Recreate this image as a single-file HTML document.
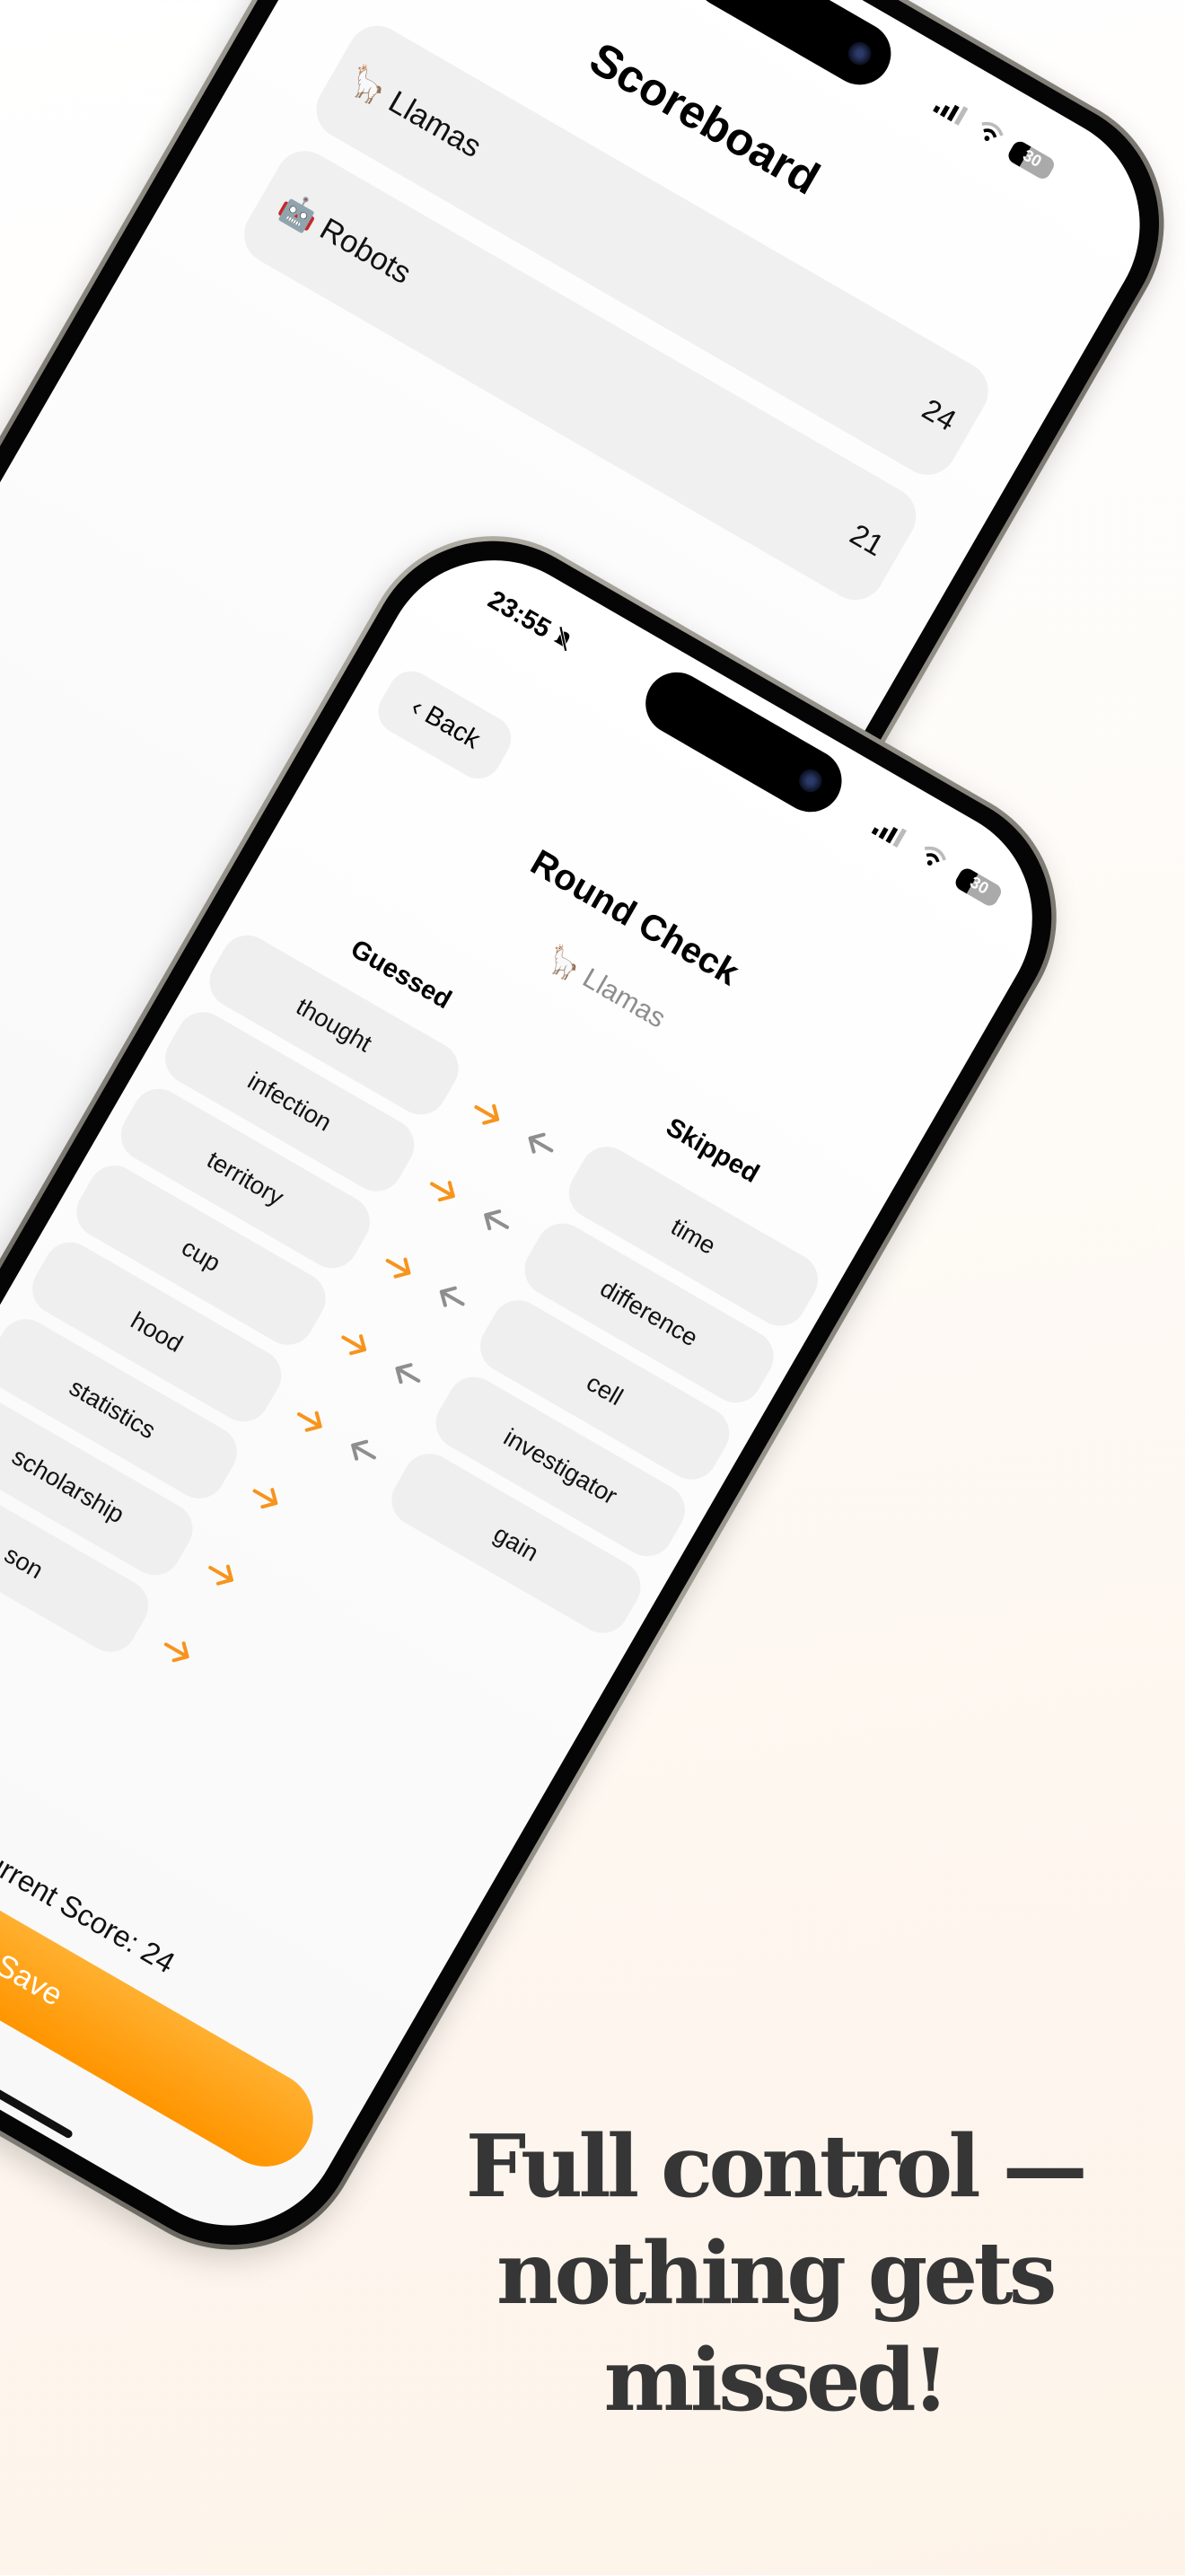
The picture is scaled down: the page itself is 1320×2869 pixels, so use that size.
<!DOCTYPE html>
<html><head><meta charset="utf-8">
<style>
html,body{margin:0;padding:0;}
body{width:1320px;height:2868px;overflow:hidden;background:linear-gradient(170deg,#ffffff 0%,#fefbf7 40%,#fdf3e9 100%);font-family:"Liberation Sans","Noto Sans CJK JP",sans-serif;}
#s{position:absolute;left:0;top:0;width:722px;height:1569px;transform:scale(1.82825);transform-origin:0 0;}
.anchor{position:absolute;width:0;height:0;transform:rotate(30deg);transform-origin:0 0;}
.phone{position:absolute;left:-232px;top:-40px;width:464px;height:1005px;border-radius:80px;background:linear-gradient(135deg,#b4b1a8,#6f6c65 40%,#a9a69d 70%,#5d5a54);box-shadow:0 6px 18px rgba(0,0,0,.18);}
.bezel{position:absolute;left:3px;top:3px;right:3px;bottom:3px;border-radius:77px;background:#050505;}
.screen{position:absolute;left:11px;top:11px;right:11px;bottom:11px;border-radius:68px;background:linear-gradient(180deg,#ffffff,#f8f8f8);overflow:hidden;}
.o{position:absolute;left:221px;top:29px;width:0;height:0;}
.c{position:absolute;transform:translate(-50%,-50%);white-space:nowrap;}
.island{position:absolute;left:-66px;top:-19px;width:132px;height:38px;border-radius:19px;background:#000;}
.cam{position:absolute;right:12px;top:12px;width:14px;height:14px;border-radius:50%;background:radial-gradient(circle,#2b3a6a 20%,#0b0f1e 70%);}
.pill{position:absolute;transform:translate(-50%,-50%);width:162px;height:46px;border-radius:16px;background:#efefef;font-size:15px;color:#111;display:flex;align-items:center;justify-content:center;}
.row{position:absolute;left:-218px;width:436px;height:74px;border-radius:18px;background:#f0f0f0;}
.t{font-size:18px;color:#111;}
h1{position:absolute;left:262px;top:1288px;width:420px;margin:0;text-align:center;font-family:"DejaVu Serif","Liberation Serif",serif;font-weight:bold;font-size:52px;line-height:65px;letter-spacing:-2.5px;color:#363636;}
</style></head><body>
<div id="s">

<!-- back phone -->
<div class="anchor" style="left:482px;top:5px;">
 <div class="phone" style="left:-287px;width:560px;"><div class="bezel"><div class="screen"><div class="o" style="left:276px;">
  <div class="c" style="left:-15px;top:82px;font-size:28px;font-weight:bold;color:#000;">Scoreboard</div>
  <div class="row" style="top:130px;left:-225px;width:445px;"></div>
  <div class="row" style="top:218px;left:-225px;width:445px;"></div>
  <div class="c t" style="left:-170px;top:167px;font-size:19px;">🦙 Llamas</div>
  <div class="c t" style="left:199px;top:167px;">24</div>
  <div class="c t" style="left:-168px;top:255px;font-size:19px;">🤖 Robots</div>
  <div class="c t" style="left:199px;top:255px;">21</div>
  <div class="c" style="left:113px;top:4px;"><svg width="20" height="12"><rect x="0" y="8" width="3" height="4" fill="#000"/><rect x="5" y="5" width="3" height="7" fill="#000"/><rect x="10" y="2" width="3" height="10" fill="#000"/><rect x="15" y="0" width="3" height="12" fill="#bbb"/></svg></div>
  <div class="c" style="left:140px;top:4px;"><svg width="16" height="12"><path d="M1 4 Q8 -2 15 4" stroke="#bbb" stroke-width="2" fill="none"/><path d="M4 7 Q8 3 12 7" stroke="#000" stroke-width="2" fill="none"/><circle cx="8" cy="10" r="1.6" fill="#000"/></svg></div>
  <div class="c" style="left:170px;top:4px;width:28px;height:14px;border-radius:5px;background:linear-gradient(90deg,#000 35%,#aaa 35%);color:#fff;font-size:10px;font-weight:bold;text-align:center;line-height:14px;">30</div>
  <div class="island"><div class="cam"></div></div>
 </div></div></div></div>
</div>

<!-- front phone -->
<div class="anchor" style="left:452px;top:448px;">
 <div class="phone"><div class="bezel"><div class="screen"><div class="o">
  <div class="c" style="left:-149px;top:2px;font-size:16px;font-weight:bold;">23:55 <svg width="12" height="13" style="vertical-align:-1px"><path d="M3 9 V5.5 Q3 2 6 2 Q9 2 9 5.5 V9 L10.5 10.5 H1.5 Z" fill="#000"/><path d="M1 1 L11 12" stroke="#fff" stroke-width="2.2"/><path d="M1 1 L11 12" stroke="#000" stroke-width="1.2"/></svg></div>
  <div class="c" style="left:105px;top:5px;"><svg width="20" height="12"><rect x="0" y="8" width="3" height="4" fill="#000"/><rect x="5" y="5" width="3" height="7" fill="#000"/><rect x="10" y="2" width="3" height="10" fill="#000"/><rect x="15" y="0" width="3" height="12" fill="#bbb"/></svg></div>
  <div class="c" style="left:135px;top:5px;"><svg width="16" height="12"><path d="M1 4 Q8 -2 15 4" stroke="#bbb" stroke-width="2" fill="none"/><path d="M4 7 Q8 3 12 7" stroke="#000" stroke-width="2" fill="none"/><circle cx="8" cy="10" r="1.6" fill="#000"/></svg></div>
  <div class="c" style="left:168px;top:5px;width:28px;height:14px;border-radius:5px;background:linear-gradient(90deg,#000 35%,#aaa 35%);color:#fff;font-size:10px;font-weight:bold;text-align:center;line-height:14px;">30</div>
  <div class="island"><div class="cam"></div></div>

  <div class="c" style="left:-163px;top:82px;width:82px;height:40px;border-radius:14px;background:#f0f0f0;font-size:16px;display:flex;align-items:center;justify-content:center;">‹&nbsp;Back</div>

  <div class="c" style="left:-4px;top:126px;font-size:22px;font-weight:bold;">Round Check</div>
  <div class="c" style="left:2px;top:172px;font-size:17px;color:#8e8e8e;">🦙 Llamas</div>
  <div class="c" style="left:-110px;top:228px;font-size:16px;font-weight:bold;">Guessed</div>
  <div class="c" style="left:108px;top:226px;font-size:16px;font-weight:bold;">Skipped</div>

  <div class="pill" style="left:-130px;top:274px;">thought</div>
  <div class="pill" style="left:-130px;top:328px;">infection</div>
  <div class="pill" style="left:-130px;top:382px;">territory</div>
  <div class="pill" style="left:-130px;top:436px;">cup</div>
  <div class="pill" style="left:-130px;top:490px;">hood</div>
  <div class="pill" style="left:-130px;top:544px;">statistics</div>
  <div class="pill" style="left:-130px;top:598px;">scholarship</div>
  <div class="pill" style="left:-130px;top:652px;">son</div>

  <div class="pill" style="left:124px;top:276px;">time</div>
  <div class="pill" style="left:124px;top:330px;">difference</div>
  <div class="pill" style="left:124px;top:384px;">cell</div>
  <div class="pill" style="left:124px;top:438px;">investigator</div>
  <div class="pill" style="left:124px;top:492px;">gain</div>

  <svg style="position:absolute;left:-32px;top:264px;overflow:visible" width="20" height="440">
   <g fill="none" stroke="#f7941d" stroke-width="2.2" stroke-linecap="round" stroke-linejoin="round">
    <path d="M2 10 H17 M11 4 L17 10 L11 16"/>
    <path d="M2 64 H17 M11 58 L17 64 L11 70"/>
    <path d="M2 118 H17 M11 112 L17 118 L11 124"/>
    <path d="M2 172 H17 M11 166 L17 172 L11 178"/>
    <path d="M2 226 H17 M11 220 L17 226 L11 232"/>
    <path d="M2 280 H17 M11 274 L17 280 L11 286"/>
    <path d="M2 334 H17 M11 328 L17 334 L11 340"/>
    <path d="M2 388 H17 M11 382 L17 388 L11 394"/>
   </g>
  </svg>
  <svg style="position:absolute;left:6px;top:264px;overflow:visible" width="20" height="300">
   <g fill="none" stroke="#8e8e8e" stroke-width="2.2" stroke-linecap="round" stroke-linejoin="round">
    <path d="M17 10 H2 M8 4 L2 10 L8 16"/>
    <path d="M17 64 H2 M8 58 L2 64 L8 70"/>
    <path d="M17 118 H2 M8 112 L2 118 L8 124"/>
    <path d="M17 172 H2 M8 166 L2 172 L8 178"/>
    <path d="M17 226 H2 M8 220 L2 226 L8 232"/>
   </g>
  </svg>

  <div class="c" style="left:0px;top:820px;font-size:18px;color:#111;">Current Score: 24</div>
  <div class="c" style="left:0px;top:872px;width:392px;height:58px;border-radius:29px;background:linear-gradient(180deg,#ffb030,#ff9500);color:#fff;font-size:19px;display:flex;align-items:center;justify-content:center;">Save</div>
  <div class="c" style="left:0px;top:940px;width:140px;height:5px;border-radius:3px;background:#111;"></div>
 </div></div></div></div>
</div>

<h1>Full control —<br>nothing gets<br>missed!</h1>
</div>
</body></html>
